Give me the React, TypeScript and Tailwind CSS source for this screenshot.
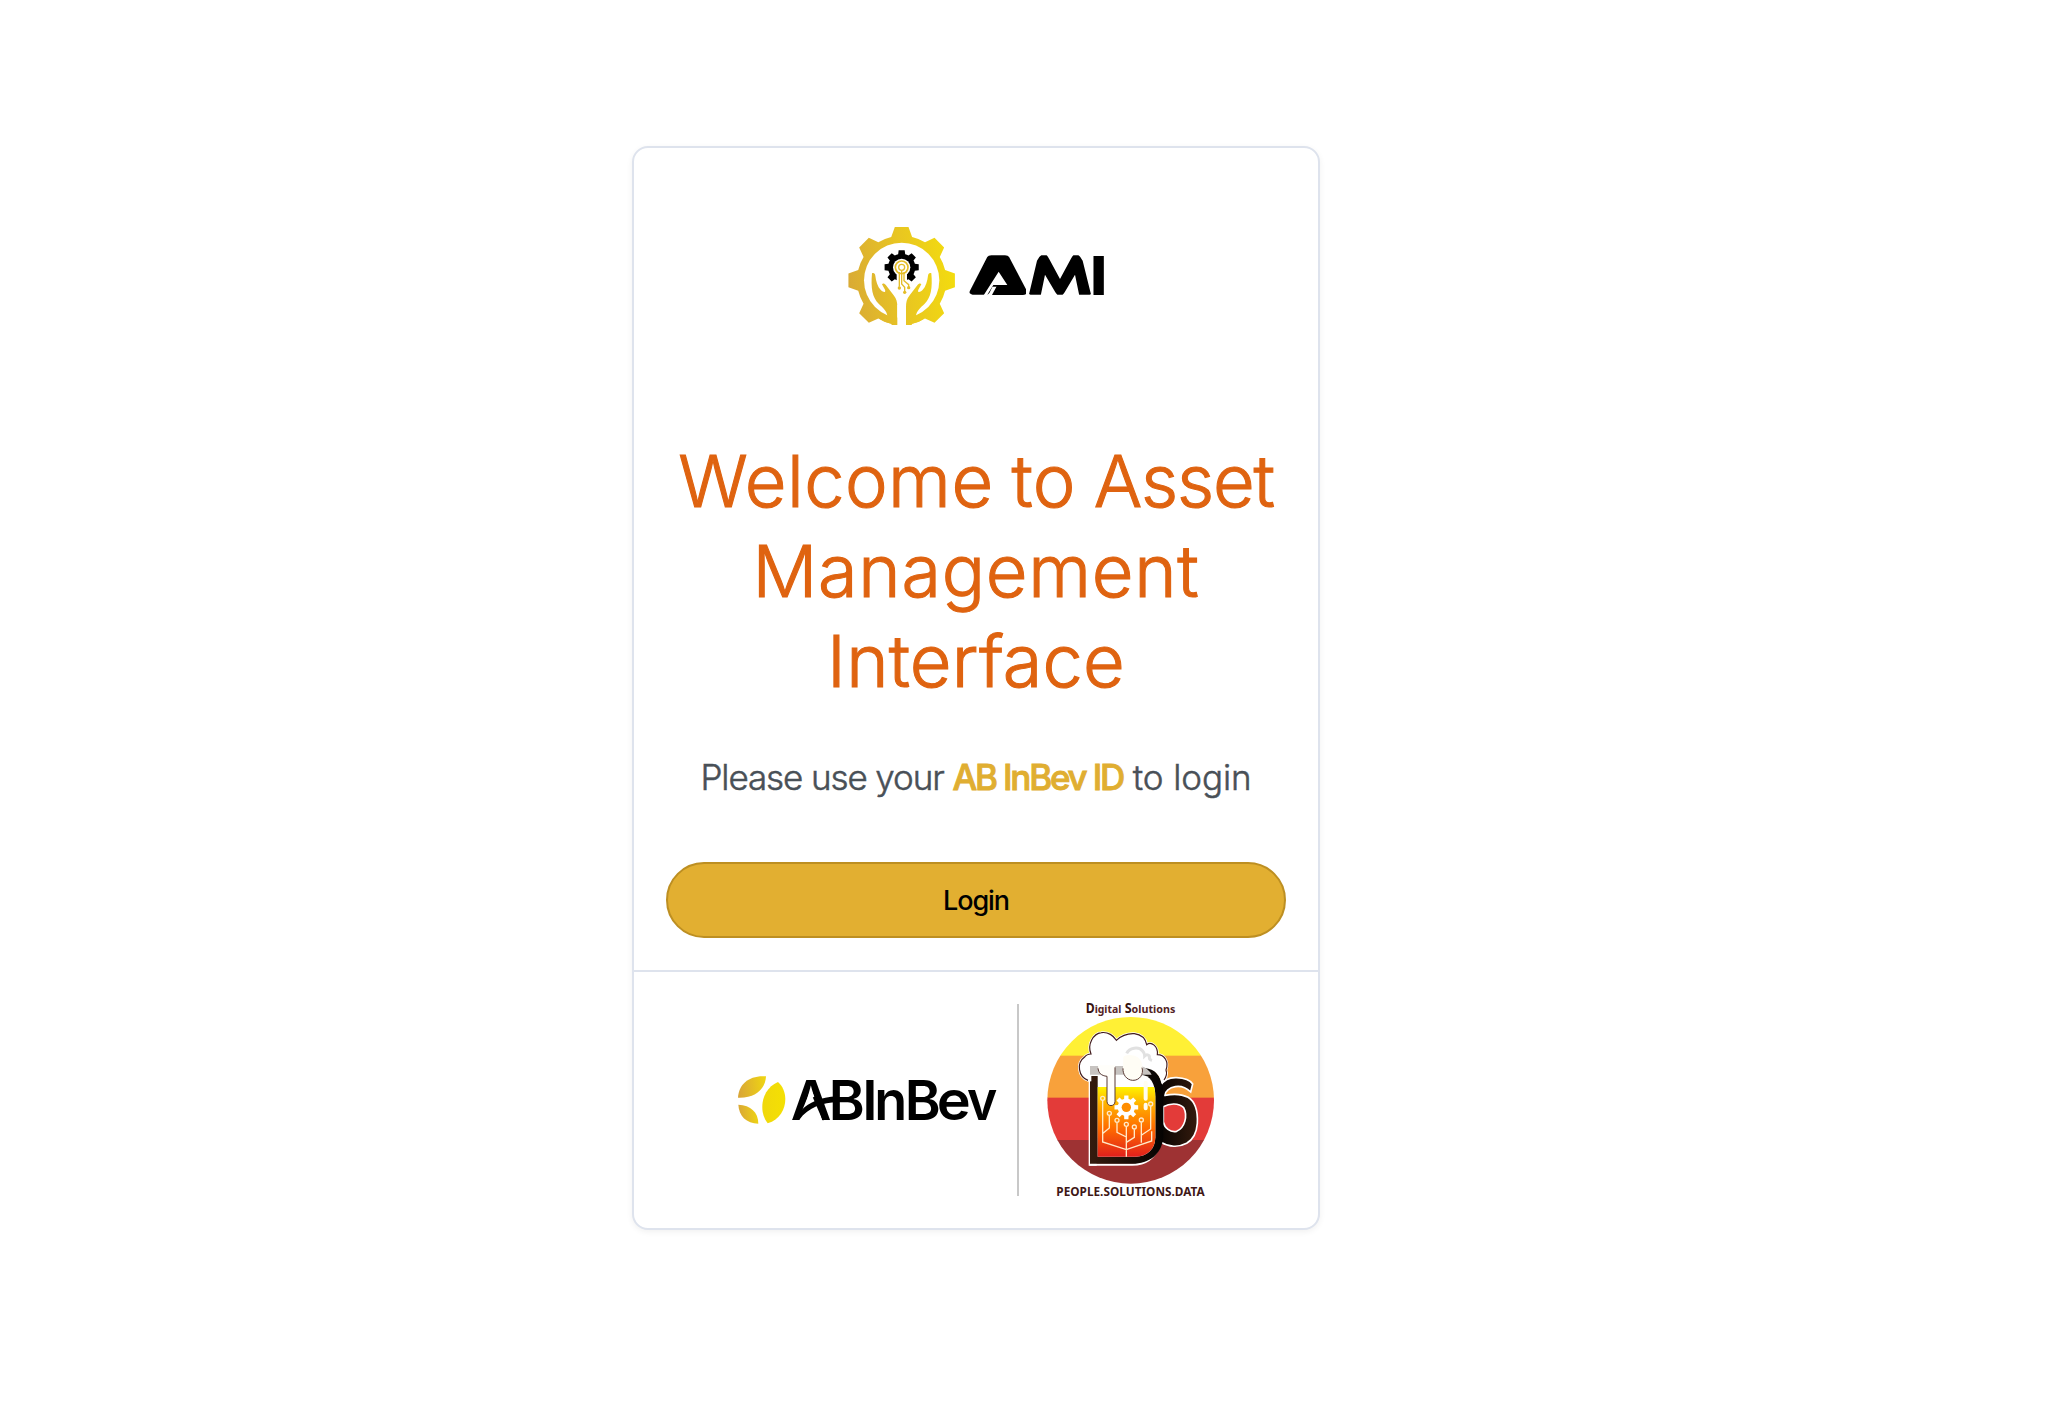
import React from "react";

function gear(cx: number, cy: number, rb: number, rt: number, n: number, hb: number, ht: number, start = -90) {
  const p = (r: number, a: number) => {
    const t = (a * Math.PI) / 180;
    return `${(cx + r * Math.cos(t)).toFixed(1)} ${(cy + r * Math.sin(t)).toFixed(1)}`;
  };
  let d = "";
  for (let i = 0; i < n; i++) {
    const a = start + (360 / n) * i;
    d += `${i ? `A${rb} ${rb} 0 0 1 ` : "M"}${p(rb, a - hb)}L${p(rt, a - ht)}L${p(rt, a + ht)}L${p(rb, a + hb)}`;
  }
  return d + `A${rb} ${rb} 0 0 1 ${p(rb, start - hb)}Z`;
}

function AmiLogo() {
  return (
    <svg width="300" height="130" viewBox="0 0 900 390" className="block">
      <defs>
        <linearGradient id="amiGold" gradientUnits="userSpaceOnUse" x1="54" y1="230" x2="375" y2="190">
          <stop offset="0" stopColor="#d9aa35" />
          <stop offset="0.5" stopColor="#e8c522" />
          <stop offset="1" stopColor="#f3dc0e" />
        </linearGradient>
      </defs>
      <path d={gear(215, 211, 134, 161, 8, 13.5, 7.3)} fill="url(#amiGold)" />
      <rect x="180" y="345" width="70" height="40" fill="#fff" />
      <circle cx="215" cy="211" r="113" fill="#fff" />
      <path
        d="M126 190C131 187 135 190 136 197C138 213 142 229 153 241C162 249 168 247 165 239L156 223C159 219 164 221 168 226L191 256C200 267 202 277 202 291V345C185 343 165 338 150 328L172 318C171 302 158 293 146 281C127 263 122 234 126 190Z"
        fill="url(#amiGold)"
      />
      <path
        d="M304 190C299 187 295 190 294 197C292 213 288 229 277 241C268 249 262 247 265 239L274 223C271 219 266 221 262 226L239 256C230 267 228 277 228 291V345C245 343 265 338 280 328L258 318C259 302 272 293 284 281C303 263 308 234 304 190Z"
        fill="url(#amiGold)"
      />
      <rect x="202" y="285" width="26" height="70" fill="#fff" />
      <path d={gear(215, 172, 41, 52, 8, 15, 10)} fill="#000" />
      <circle cx="215" cy="172" r="26" fill="#fff" />
      <path d="M200 180H231V235H200Z" fill="#fff" />
      <g fill="none" stroke="#e4bd28" strokeWidth="5">
        <circle cx="215" cy="172" r="19" />
        <circle cx="215" cy="172" r="9" strokeWidth="4" />
        <path d="M208 186V230M215 182V222L224 232V245M222 186V212L236 224V231" strokeWidth="4" />
      </g>
      <g fill="#e4bd28">
        <circle cx="208" cy="234" r="5" />
        <circle cx="224" cy="247" r="5" />
        <circle cx="236" cy="233" r="5" />
      </g>
      <g fontFamily="Inter, sans-serif" fill="#000">
        <g fontWeight="700" fontSize="138" stroke="#000" strokeWidth="17" strokeLinejoin="round">
          <text x="427" y="247" textLength="157" lengthAdjust="spacingAndGlyphs">A</text>
          <text x="593" y="247" textLength="194" lengthAdjust="spacingAndGlyphs">M</text>
        </g>
      </g>
      <path d="M486 255L502 225H562L582 255Z" fill="#000" />
      <path d="M506 185L532 225H490L470 257H460Z" fill="#fff" />
      <path
        d="M588 130H640Q626 140 621 152L596 257H588ZM740 130H789V257H784L758 152Q752 140 740 130ZM645 194L632 257H684Q680 253 676 247ZM735 194L748 257H696Q700 253 704 247ZM646 130Q654 140 658 148L690 207L722 148Q726 140 734 130Z"
        fill="#fff"
      />
      <text x="783" y="255" fontFamily="Inter, sans-serif" fontWeight="900" fontSize="160" textLength="46" lengthAdjust="spacingAndGlyphs">I</text>
    </svg>
  );
}

function AbInBevLogo() {
  return (
    <svg width="280" height="100" viewBox="0 0 840 300" className="block shrink-0">
      <defs>
        <linearGradient id="leafDark" x1="0" y1="0.5" x2="1" y2="0.4">
          <stop offset="0" stopColor="#d9a637" />
          <stop offset="1" stopColor="#efd512" />
        </linearGradient>
        <linearGradient id="leafLight" x1="0" y1="0" x2="1" y2="0">
          <stop offset="0" stopColor="#f0d80c" />
          <stop offset="1" stopColor="#f4e003" />
        </linearGradient>
      </defs>
      <path d="M54 143C56 102 88 75 138 79C136 119 105 145 54 143Z" fill="url(#leafDark)" />
      <path d="M55 164C92 165 115 187 115 221C79 220 57 198 55 164Z" fill="url(#leafDark)" />
      <path d="M174 96C210 127 203 202 143 220C114 183 124 117 174 96Z" fill="url(#leafLight)" />
      <g fontFamily="Inter, sans-serif" fontWeight="600" fontSize="164" fill="#000">
        <text x="212" y="209" textLength="122" lengthAdjust="spacingAndGlyphs">A</text>
        <text x="326" y="209" textLength="108" lengthAdjust="spacingAndGlyphs">B</text>
        <text x="427" y="209" textLength="46" lengthAdjust="spacingAndGlyphs">I</text>
        <text x="463" y="209" textLength="99" lengthAdjust="spacingAndGlyphs">n</text>
        <text x="554" y="209" textLength="108" lengthAdjust="spacingAndGlyphs">B</text>
        <text x="650" y="209" textLength="102" lengthAdjust="spacingAndGlyphs">e</text>
        <text x="741" y="209" textLength="91" lengthAdjust="spacingAndGlyphs">v</text>
      </g>
      <path d="M273 117L288 152L296 175L306 210H238L248 178Z" fill="#fff" />
      <path d="M217 209L247 178C265 160 300 141 352 139V157C310 157 265 172 238 209Z" fill="#000" />
      <path d="M284 140L314 209" fill="none" stroke="#000" strokeWidth="12" />
    </svg>
  );
}

function DigitalSolutionsLogo() {
  const nodes: [number, number][] = [[218, 325], [238, 370], [261, 391], [289, 403], [313, 411], [334, 390], [362, 342]];
  return (
    <svg width="200" height="220" viewBox="0 0 600 660" className="block shrink-0">
      <defs>
        <clipPath id="disc"><circle cx="302" cy="331" r="250" /></clipPath>
        <linearGradient id="beer" x1="0" y1="0" x2="0" y2="1">
          <stop offset="0" stopColor="#fff200" />
          <stop offset="0.25" stopColor="#ffb000" />
          <stop offset="0.6" stopColor="#ff6a00" />
          <stop offset="1" stopColor="#e0201c" />
        </linearGradient>
        <linearGradient id="mug" x1="0" y1="0" x2="1" y2="0">
          <stop offset="0" stopColor="#351b0e" />
          <stop offset="0.65" stopColor="#150b05" />
          <stop offset="1" stopColor="#050302" />
        </linearGradient>
        <linearGradient id="handle" x1="0" y1="0" x2="1" y2="0">
          <stop offset="0" stopColor="#000" />
          <stop offset="1" stopColor="#351b0e" />
        </linearGradient>
      </defs>
      <g clipPath="url(#disc)">
        <rect x="50" y="80" width="504" height="118" fill="#fff035" />
        <rect x="50" y="197" width="504" height="127" fill="#f8a13b" />
        <rect x="50" y="323" width="504" height="128" fill="#e33b39" />
        <rect x="50" y="450" width="504" height="134" fill="#9e3233" />
      </g>
      <g fontFamily="'Noto Sans', sans-serif" fontWeight="700">
        <text x="167" y="70" textLength="107" lengthAdjust="spacingAndGlyphs" fontSize="34" fill="#542425">
          <tspan fontSize="40" fill="#35110f">D</tspan>igital
        </text>
        <text x="284" y="70" textLength="152" lengthAdjust="spacingAndGlyphs" fontSize="34" fill="#542425">
          <tspan fontSize="40" fill="#35110f">S</tspan>olutions
        </text>
        <text x="79" y="618" textLength="445" lengthAdjust="spacingAndGlyphs" fontSize="38" fill="#401817">PEOPLE.SOLUTIONS.DATA</text>
      </g>
      <path
        d="M376 300L392 286C402 270 420 262 440 263C460 264 480 270 488 282L482 306C468 293 452 287 436 290C418 293 405 304 405 316C425 312 455 312 474 322C494 334 504 362 502 400C500 428 490 448 470 460C446 473 416 471 394 457L370 440ZM400 350V396C404 414 420 428 440 424C464 414 474 378 461 353C446 338 418 340 400 350Z"
        fill="url(#handle)"
        fillRule="evenodd"
        stroke="#fff"
        strokeWidth="5"
      />
      <path d="M176 228H200V527H176Z" fill="#fff" />
      <path d="M390 462C374 505 343 524 307 524H178" fill="none" stroke="#fff" strokeWidth="7" />
      <path d="M180 228H330C375 228 398 262 400 310V440C396 493 357 521 307 521H180Z" fill="url(#mug)" />
      <path d="M203 254H330C361 254 376 281 376 318V442C376 477 352 500 317 500H203Z" fill="#fff" />
      <path d="M203 291H372Q376 302 376 320V442C376 477 352 500 317 500H203Z" fill="url(#beer)" />
      <path
        d="M174 271C145 261 139 219 163 202C168 195 176 192 183 192C171 163 190 131 214 128C234 125 251 137 259 151C276 135 294 130 313 131C336 134 347 149 350 164C364 153 385 169 382 194C404 194 417 216 408 240C414 254 407 269 397 275C390 244 370 229 332 229H310V254H180V270Z"
        fill="#fff"
        stroke="#fff"
        strokeWidth="8"
      />
      <path
        d="M174 271C145 261 139 219 163 202C168 195 176 192 183 192C171 163 190 131 214 128C234 125 251 137 259 151C276 135 294 130 313 131C336 134 347 149 350 164C364 153 385 169 382 194C404 194 417 216 408 240C412 251 407 263 402 270"
        fill="none"
        stroke="#421b1c"
        strokeWidth="3.5"
      />
      <path d="M180 228H333Q354 234 365 254H180Z" fill="#c7c3c0" />
      <path d="M204 226C204 249 212 257 231 259V334C231 351 255 351 255 334V226Z" fill="#fffefa" />
      <path d="M204 235C206 249 213 257 231 259V334C231 351 255 351 255 334V232" fill="none" stroke="#593a35" strokeWidth="3" />
      <path d="M280 203C280 190 336 190 336 225C347 249 329 272 308 271C289 270 277 253 279 235Z" fill="#fffdf5" />
      <path d="M279 235C278 253 289 270 308 271C329 272 342 252 336 233" fill="none" stroke="#593a35" strokeWidth="3" />
      <path d="M290 190C298 173 326 169 337 182C343 188 344 193 344 198C351 191 360 196 358 203C358 208 362 210 366 211" fill="none" stroke="#e1e1e1" strokeWidth="9" />
      <path d="M347 278V326M347 344V355" stroke="#fffdf0" strokeWidth="12" strokeLinecap="round" />
      <path d={gear(289, 352, 26, 36, 8, 15, 10)} fill="#fff" />
      <circle cx="289" cy="352" r="14" fill="#ff8d00" />
      <g fill="none" stroke="#ffe9c8" strokeWidth="4">
        <path d="M218 332V456L289 479L365 453V424M238 377V414L219 430M261 398V427L289 441M289 410V500M313 418V442L289 457M334 397V458M362 349V417L335 435" />
        {nodes.map(([x, y]) => (
          <circle key={`${x}-${y}`} cx={x} cy={y} r="6" />
        ))}
      </g>
    </svg>
  );
}

export default function App() {
  return (
    <main className="h-[1424px] w-[2048px] bg-white pt-[146px] pl-[632px] font-['Inter',sans-serif]">
      <section className="flex h-[1084px] w-[688px] flex-col rounded-2xl border-2 border-[#dee3ed] bg-white shadow-[0_2px_6px_rgba(0,0,0,0.06)]">
        <div className="mt-[62px] ml-[196px]">
          <AmiLogo />
        </div>
        <h1 className="mt-[96px] text-center text-[72px] leading-[90px] font-light whitespace-nowrap text-[#df6310] [-webkit-text-stroke:1.1px_#df6310]">
          <span className="block tracking-[0.5px] [word-spacing:-3px]">
            Welcome to <span className="tracking-[-1.2px]">Asset</span>
          </span>
          <span className="block tracking-[0.7px]">Management</span>
          <span className="block tracking-[0.2px]">Interface</span>
        </h1>
        <p className="mt-[44px] flex justify-center text-[35px] leading-[54px] font-light whitespace-pre text-[#495057] [-webkit-text-stroke:0.5px_#495057]">
          <span className="tracking-[-1.1px]">Please use your </span>
          <strong className="font-medium tracking-[-2.2px] text-[#e0ae31] [-webkit-text-stroke:0.9px_#e0ae31]">AB InBev ID</strong>
          <span className="tracking-[-0.1px]"> to login</span>
        </p>
        <button className="mx-8 mt-[58px] h-[76px] rounded-full border-2 border-[#bd8f22] bg-[#e2af31] pt-0.5 text-[27px] font-medium tracking-[-1.1px] text-black">
          Login
        </button>
        <footer className="mt-8 flex h-[258px] items-center border-t-2 border-[#dee3ed] pl-[86px]">
          <AbInBevLogo />
          <div className="mr-[11px] ml-[17px] h-[192px] w-[2px] bg-[#c8c8c8]" />
          <DigitalSolutionsLogo />
        </footer>
      </section>
    </main>
  );
}
